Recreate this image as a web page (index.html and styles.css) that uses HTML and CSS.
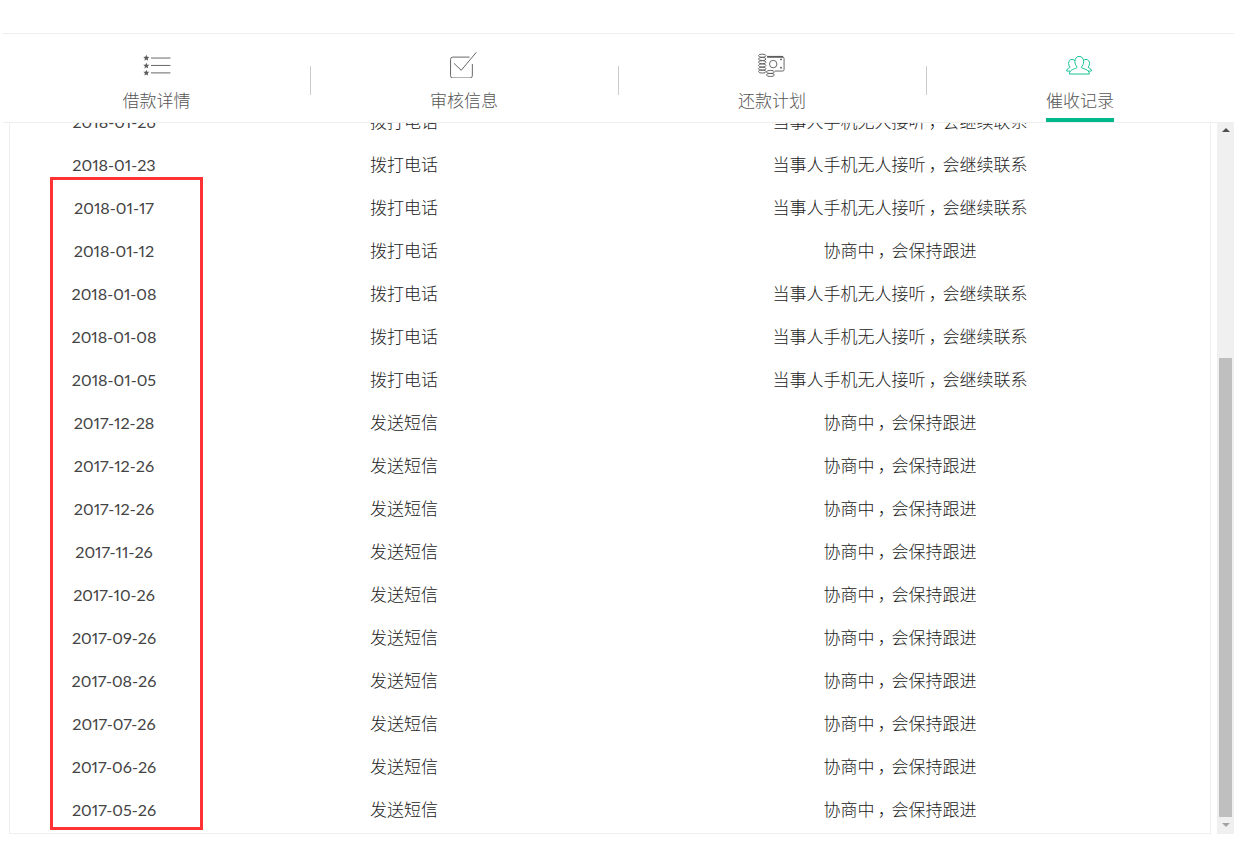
FILE: index.html
```html
<!DOCTYPE html>
<html lang="zh">
<head>
<meta charset="utf-8">
<title>催收记录</title>
<link rel="stylesheet" href="styles.css">
</head>
<body>
<div class="page">
  <nav class="tabs">
    <a class="tab">
      <svg class="icon" viewBox="0 0 34 28" width="34" height="28"><g class="ic-fill"><path d="M5.500 3l.9 2.200 2.400.2-1.800 1.600.5 2.300-2-1.200-2 1.200.5-2.300-1.800-1.600 2.400-.2z"/><path d="M5.500 11.400l.9 2.200 2.400.2-1.800 1.600.5 2.300-2-1.200-2 1.200.5-2.300-1.800-1.600 2.400-.2z"/><path d="M5.500 19l.9 2.200 2.400.2-1.800 1.600.5 2.300-2-1.200-2 1.200.5-2.300-1.800-1.600 2.400-.2z"/></g><path class="ic-line" d="M10.500 6.500h21M10.500 14.500h21M10.500 22.500h21"/></svg>
      <span class="tab-label">借款详情</span>
    </a>
    <a class="tab">
      <svg class="icon" viewBox="0 0 34 28" width="34" height="28"><path class="ic-line" d="M23 5.500H5a2.500 2.500 0 0 0-2.500 2.500v17.500a2.500 2.500 0 0 0 2.500 2.500h18.500a2.500 2.500 0 0 0 2.500-2.500V13"/><path class="ic-line" d="M6.300 12.300l7.700 7.400L30.300.3"/></svg>
      <span class="tab-label">审核信息</span>
    </a>
    <a class="tab">
      <svg class="icon" viewBox="0 0 34 28" width="34" height="28"><g class="ic-line"><path d="M20 20.500h8.500a1.500 1.500 0 0 0 1.500-1.500V7a1.500 1.500 0 0 0-1.500-1.500"/><path class="ic-bold" d="M11.700 5.200H29"/><circle cx="18.300" cy="13" r="4"/><ellipse cx="6.500" cy="4" rx="4" ry="1.700"/><ellipse cx="6.500" cy="7.500" rx="4" ry="1.700"/><ellipse cx="6.500" cy="11" rx="4" ry="1.700"/><ellipse cx="6.500" cy="14.500" rx="4" ry="1.700"/><ellipse cx="6.500" cy="18" rx="4" ry="1.700"/><ellipse cx="6.500" cy="21" rx="4" ry="1.700"/><ellipse cx="15.300" cy="21.500" rx="4.200" ry="1.700"/><ellipse cx="15.300" cy="24.700" rx="4.200" ry="1.700"/></g><g class="ic-fill"><circle cx="26.700" cy="8" r="1"/><circle cx="26.700" cy="17" r="1"/></g></svg>
      <span class="tab-label">还款计划</span>
    </a>
    <a class="tab tab-active">
      <svg class="icon icon-green" viewBox="0 0 34 28" width="34" height="28"><path class="ic-line" d="M16 4.700c3 0 5 2.500 5 5.500 0 2.500-1 4.500-2.500 6 0 1.500 5 2 7 4 1 1 1.500 2 1.500 3.500H5.500c0-1.500.5-2.500 1.500-3.500 2-2 7-2.500 7-4-1.500-1.500-2.500-3.500-2.500-6 0-3 2-5.500 4.500-5.500z"/><path class="ic-line" d="M11.500 9.500C10.800 8.500 9.700 8 8.500 8c-2.300 0-3.800 2-3.800 4.300 0 1.700.7 3 1.600 3.900 0 1.300-3.600 1.300-3.600 3.600v.7h3.500"/><path class="ic-line" d="M20.500 9.500C21.200 8.500 22.300 8 23.500 8c2.300 0 3.800 2 3.800 4.300 0 1.700-.7 3-1.600 3.900 0 1.300 3.600 1.300 3.600 3.600v.7h-3.500"/></svg>
      <span class="tab-label">催收记录</span>
    </a>
  </nav>
  <div class="content">
    <div class="panel">
      <table class="records">
        <colgroup><col class="col-date"><col class="col-type"><col class="col-note"></colgroup>
        <tbody>
          <tr><td class="date">2018-01-26</td><td>拨打电话</td><td>当事人手机无人接听<span class="comma">，</span>会继续联系</td></tr>
          <tr><td class="date">2018-01-23</td><td>拨打电话</td><td>当事人手机无人接听<span class="comma">，</span>会继续联系</td></tr>
          <tr><td class="date">2018-01-17</td><td>拨打电话</td><td>当事人手机无人接听<span class="comma">，</span>会继续联系</td></tr>
          <tr><td class="date">2018-01-12</td><td>拨打电话</td><td>协商中<span class="comma">，</span>会保持跟进</td></tr>
          <tr><td class="date">2018-01-08</td><td>拨打电话</td><td>当事人手机无人接听<span class="comma">，</span>会继续联系</td></tr>
          <tr><td class="date">2018-01-08</td><td>拨打电话</td><td>当事人手机无人接听<span class="comma">，</span>会继续联系</td></tr>
          <tr><td class="date">2018-01-05</td><td>拨打电话</td><td>当事人手机无人接听<span class="comma">，</span>会继续联系</td></tr>
          <tr><td class="date">2017-12-28</td><td>发送短信</td><td>协商中<span class="comma">，</span>会保持跟进</td></tr>
          <tr><td class="date">2017-12-26</td><td>发送短信</td><td>协商中<span class="comma">，</span>会保持跟进</td></tr>
          <tr><td class="date">2017-12-26</td><td>发送短信</td><td>协商中<span class="comma">，</span>会保持跟进</td></tr>
          <tr><td class="date">2017-11-26</td><td>发送短信</td><td>协商中<span class="comma">，</span>会保持跟进</td></tr>
          <tr><td class="date">2017-10-26</td><td>发送短信</td><td>协商中<span class="comma">，</span>会保持跟进</td></tr>
          <tr><td class="date">2017-09-26</td><td>发送短信</td><td>协商中<span class="comma">，</span>会保持跟进</td></tr>
          <tr><td class="date">2017-08-26</td><td>发送短信</td><td>协商中<span class="comma">，</span>会保持跟进</td></tr>
          <tr><td class="date">2017-07-26</td><td>发送短信</td><td>协商中<span class="comma">，</span>会保持跟进</td></tr>
          <tr><td class="date">2017-06-26</td><td>发送短信</td><td>协商中<span class="comma">，</span>会保持跟进</td></tr>
          <tr><td class="date">2017-05-26</td><td>发送短信</td><td>协商中<span class="comma">，</span>会保持跟进</td></tr>
        </tbody>
      </table>
    </div>
    <div class="scrollbar">
      <div class="arrow arrow-up"></div>
      <div class="track-space"></div>
      <div class="thumb"></div>
      <div class="arrow arrow-down"></div>
    </div>
    <div class="highlight"></div>
  </div>
</div>
</body>
</html>
```

FILE: styles.css
```css
* { box-sizing: border-box; }
html, body { margin: 0; padding: 0; background: #fff; }
body {
  height: 851px;
  overflow: hidden;
  font-family: Lato, "Noto Sans CJK SC", sans-serif;
  font-weight: 300;
  font-feature-settings: "pnum";
  color: #222;
}
.page {
  width: 1231px;
  margin-left: 3px;
  padding-top: 33px;
}
.tabs {
  display: flex;
  height: 90px;
  border-top: 1px solid #eee;
  border-bottom: 1px solid #eee;
  background: #fff;
  position: relative;
  z-index: 2;
}
.tab {
  flex: 0 0 308px;
  position: relative;
  display: flex;
  flex-direction: column;
  align-items: center;
  padding-top: 18px;
  color: #555;
}
.tab:first-child { flex-basis: 307px; }
.tab:not(:last-child)::after {
  content: "";
  position: absolute;
  right: -1px;
  top: 32px;
  width: 1px;
  height: 29px;
  background: #ccc;
}
.icon { display: block; }
.ic-line { fill: none; stroke: #5c5c5c; stroke-width: 1; }
.ic-bold { stroke-width: 2; }
.ic-fill { fill: #5c5c5c; }
.icon-green .ic-line { stroke: #00bd8c; }
.tab-label {
  font-size: 17px;
  line-height: 24px;
  margin-top: 11px;
  padding-bottom: 5px;
  border-bottom: 4px solid transparent;
}
.tab-active .tab-label { border-bottom-color: #00b98b; }
.content {
  position: relative;
  display: flex;
  height: 712px;
  margin-top: -1px;
}
.panel {
  width: 1208px;
  margin-left: 6px;
  height: 712px;
  border: 1px solid #eee;
  border-top: 0;
  overflow: hidden;
}
.records {
  width: 100%;
  margin-top: -22px;
  border-collapse: collapse;
  table-layout: fixed;
  font-size: 17px;
}
.col-date { width: 208px; }
.col-type { width: 372px; }
.records td {
  height: 43px;
  padding: 0 0 2px;
  text-align: center;
  white-space: nowrap;
}
.records .date {
  padding: 0;
  font-size: 16.2px;
  font-weight: 400;
  color: #444;
}
.comma {
  display: inline-block;
  width: 1em;
  text-align: center;
  font-feature-settings: "palt";
}
.scrollbar {
  width: 17px;
  margin-left: 6px;
  background: #f0f0f0;
  display: flex;
  flex-direction: column;
  align-items: center;
}
.arrow {
  width: 0;
  height: 0;
  border-left: 4px solid transparent;
  border-right: 4px solid transparent;
}
.arrow-up { margin-top: 6px; border-bottom: 4px solid #505050; }
.track-space { height: 226px; }
.thumb { flex: 1; width: 13px; background: #bfbfbf; }
.arrow-down { margin: 6px 0 7px; border-top: 4px solid #a3a3a3; }
.highlight {
  position: absolute;
  left: 47px;
  top: 55px;
  width: 153px;
  height: 653px;
  border: 3px solid #f33;
}
```
